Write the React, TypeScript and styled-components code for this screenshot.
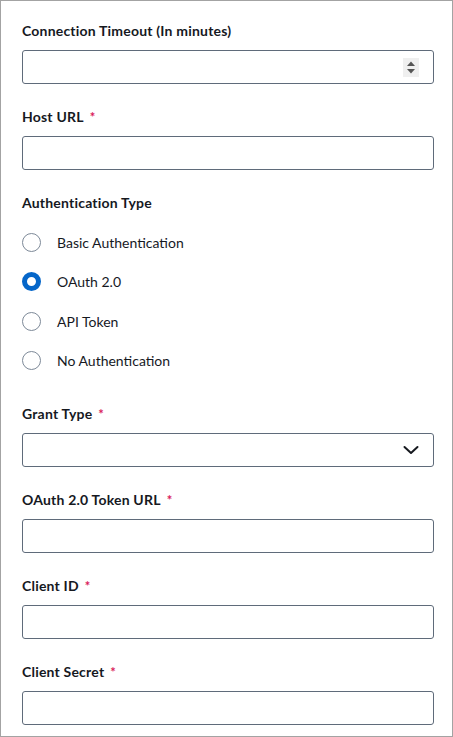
import React, { useState } from 'react';
import styled, { createGlobalStyle } from 'styled-components';

const GlobalStyle = createGlobalStyle`
    html, body {
        margin: 0;
        padding: 0;
        background: #ffffff;
    }
    * {
        box-sizing: border-box;
    }
`;

const Panel = styled.div`
    width: 453px;
    height: 737px;
    border: 1px solid #a3a3a3;
    padding: 20px 18px 0 21px;
    overflow: hidden;
    font-family: Lato, "Liberation Sans", sans-serif;
    color: #16191f;
`;

const Form = styled.div`
    display: flex;
    flex-direction: column;
    gap: 23px;
`;

const Field = styled.div`
    display: flex;
    flex-direction: column;
    gap: 9px;
`;

const Label = styled.div`
    font-size: 14px;
    font-weight: 700;
    line-height: 20px;
    height: 20px;
    letter-spacing: 0.2px;
    color: #16191f;
`;

const Star = styled.span`
    color: #d91a5a;
    font-size: 13px;
    margin-left: 6px;
    font-weight: 700;
`;

const Box = styled.div`
    position: relative;
    height: 34px;
    border: 1px solid #5f6b7a;
    border-radius: 3px;
    background: #ffffff;
    display: flex;
    align-items: center;
    justify-content: flex-end;
    padding-right: 14px;
`;

const Spinner = styled.div`
    width: 16px;
    height: 19px;
    background: #efefef;
    display: flex;
    align-items: center;
    justify-content: center;
`;

const RadioList = styled.div`
    display: flex;
    flex-direction: column;
    gap: 19.5px;
    margin: 10px 0 10px;
`;

const RadioRow = styled.label`
    display: flex;
    align-items: center;
    height: 20px;
    gap: 16px;
    font-size: 14px;
    color: #16191f;
    cursor: pointer;
`;

const RadioDot = styled.span<{ $checked: boolean }>`
    width: 19px;
    height: 19px;
    border-radius: 50%;
    border: ${p => (p.$checked ? '5px solid #0566c9' : '1.5px solid #7d8998')};
    background: #ffffff;
    flex-shrink: 0;
`;

function TextField({ label, required }: { label: string; required?: boolean }) {
    return (
        <Field>
            <Label>{label}{required && <Star>*</Star>}</Label>
            <Box />
        </Field>
    );
}

const options = ['Basic Authentication', 'OAuth 2.0', 'API Token', 'No Authentication'];

export default function App() {
    const [auth, setAuth] = useState('OAuth 2.0');

    return (
        <>
            <GlobalStyle />
            <Panel>
                <Form>
                    <Field>
                        <Label>Connection Timeout (In minutes)</Label>
                        <Box>
                            <Spinner>
                                <svg width="10" height="15" viewBox="0 0 10 15">
                                    <path d="M5 1.5 L9 6 H1 Z" fill="#555" />
                                    <path d="M5 13.5 L9 9 H1 Z" fill="#555" />
                                </svg>
                            </Spinner>
                        </Box>
                    </Field>
                    <TextField label="Host URL" required />
                    <Field>
                        <Label>Authentication Type</Label>
                        <RadioList>
                            {options.map(o => (
                                <RadioRow key={o} onClick={() => setAuth(o)}>
                                    <RadioDot $checked={auth === o} />
                                    {o}
                                </RadioRow>
                            ))}
                        </RadioList>
                    </Field>
                    <Field>
                        <Label>Grant Type<Star>*</Star></Label>
                        <Box>
                            <svg width="16" height="10" viewBox="0 0 16 10">
                                <path d="M1.5 2 L8 8 L14.5 2" stroke="#16191f" strokeWidth="2" fill="none" strokeLinecap="round" strokeLinejoin="round" />
                            </svg>
                        </Box>
                    </Field>
                    <TextField label="OAuth 2.0 Token URL" required />
                    <TextField label="Client ID" required />
                    <TextField label="Client Secret" required />
                </Form>
            </Panel>
        </>
    );
}
